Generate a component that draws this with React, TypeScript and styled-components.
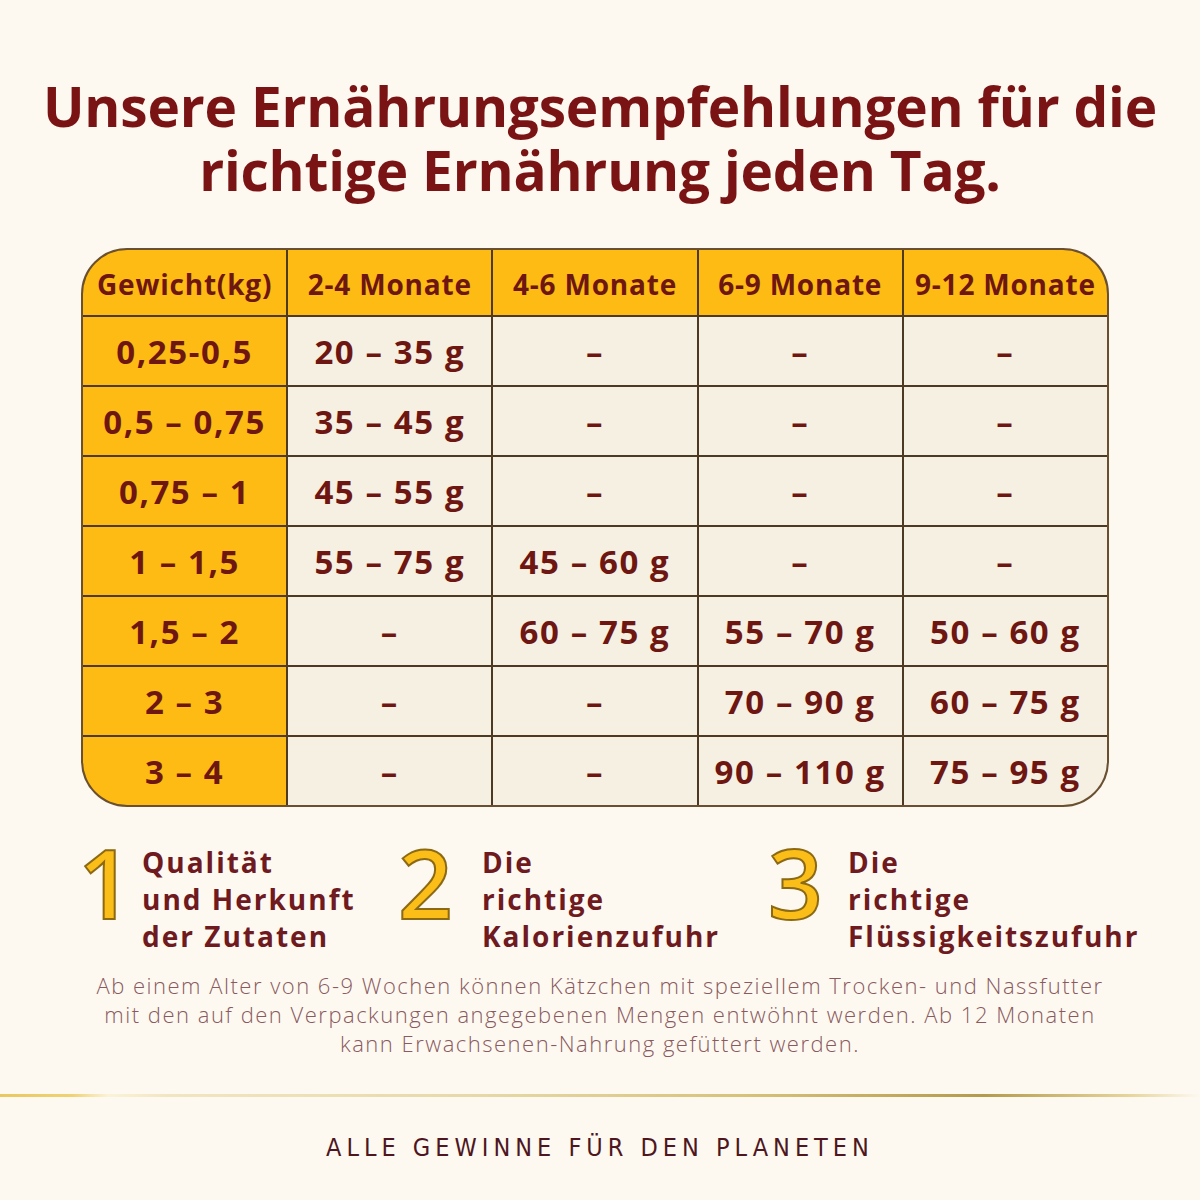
import React from "react";
import styled, { createGlobalStyle } from "styled-components";

const Global = createGlobalStyle`
  html, body { margin: 0; padding: 0; background: #fdf9f1; }
  body { font-family: "Open Sans", "Noto Sans", sans-serif; }
`;

const Page = styled.div`
  width: 1200px;
  height: 1200px;
  background: #fdf9f1;
  display: flex;
  flex-direction: column;
  align-items: center;
  box-sizing: border-box;
  padding-top: 74px;
  overflow: hidden;
`;

const Title = styled.h1`
  margin: 0;
  display: flex;
  flex-direction: column;
  align-items: center;
  font-family: "Open Sans", sans-serif;
  font-weight: 700;
  font-size: 55px;
  color: #7a1414;
  text-align: center;
  letter-spacing: -0.2px;
`;

const TitleLine = styled.span`
  display: block;
  height: 64px;
  line-height: 64px;
  white-space: nowrap;
`;

const Table = styled.div`
  margin: 46px 0 0 -10px;
  width: 1028px;
  box-sizing: border-box;
  display: grid;
  grid-template-columns: repeat(5, 1fr);
  grid-template-rows: 65px repeat(7, 68px);
  gap: 2px;
  background: #4e3a22;
  border: 2px solid #6a5030;
  border-radius: 46px;
  overflow: hidden;
`;

const Cell = styled.div<{ $yellow?: boolean; $head?: boolean }>`
  display: flex;
  align-items: center;
  justify-content: center;
  background: ${(p) => (p.$yellow ? "#fdbb13" : "#f6f0e3")};
  color: #6e1612;
  font-family: "Open Sans", sans-serif;
  font-weight: 700;
  font-size: ${(p) => (p.$head ? "28px" : "33px")};
  letter-spacing: ${(p) => (p.$head ? "0.8px" : "1.6px")};
  white-space: nowrap;
  padding-top: ${(p) => (p.$head ? "2px" : "0")};
`;

const Features = styled.div`
  margin-top: 40px;
  width: 1200px;
  display: grid;
  grid-template-columns: 320px 370px auto;
  padding-left: 78px;
  box-sizing: border-box;
`;

const Feature = styled.div`
  display: flex;
  align-items: flex-start;
`;

const Num = styled.div<{ $w: number }>`
  font-family: "Open Sans", sans-serif;
  font-weight: 600;
  font-size: 96px;
  line-height: 96px;
  color: #fbbd18;
  -webkit-text-stroke: 2px #8c6a14;
  margin-top: -13px;
  width: ${(p) => p.$w}px;
  flex-shrink: 0;
`;

const FeatureText = styled.div`
  font-family: "Open Sans", sans-serif;
  font-weight: 700;
  font-size: 28px;
  line-height: 37px;
  letter-spacing: 2px;
  color: #6e1a1e;
  margin-top: -3px;
  white-space: nowrap;
`;

const Note = styled.p`
  margin: 16px 0 0;
  width: 1100px;
  font-family: "Open Sans", sans-serif;
  font-weight: 300;
  font-size: 22px;
  line-height: 29px;
  color: #8a5a5e;
  text-align: center;
  letter-spacing: 1.5px;
  white-space: nowrap;
`;

const Divider = styled.div`
  margin-top: 36px;
  width: 1200px;
  height: 3px;
  background: linear-gradient(
    90deg,
    #e9c860 0%,
    #efd274 6%,
    #fbf3d8 9%,
    #f1e6c2 14%,
    #e6d9a8 40%,
    #d8c27a 62%,
    #b49a4c 82%,
    #e6d49a 94%,
    #fdf9f1 100%
  );
`;

const Footer = styled.div`
  margin-top: 36px;
  font-family: "DejaVu Sans Condensed", "Liberation Sans Narrow", "Open Sans", sans-serif;
  font-weight: 400;
  font-size: 25px;
  letter-spacing: 5px;
  color: #4e1620;
  text-transform: uppercase;
`;

const headers = ["Gewicht(kg)", "2-4 Monate", "4-6 Monate", "6-9 Monate", "9-12 Monate"];

const rows: string[][] = [
  ["0,25-0,5", "20 - 35 g", "-", "-", "-"],
  ["0,5 - 0,75", "35 - 45 g", "-", "-", "-"],
  ["0,75 - 1", "45 - 55 g", "-", "-", "-"],
  ["1 - 1,5", "55 - 75 g", "45 - 60 g", "-", "-"],
  ["1,5 - 2", "-", "60 - 75 g", "55 - 70 g", "50 - 60 g"],
  ["2 - 3", "-", "-", "70 - 90 g", "60 - 75 g"],
  ["3 - 4", "-", "-", "90 - 110 g", "75 - 95 g"],
];

const features = [
  { n: "1", w: 64, lines: ["Qualität", "und Herkunft", "der Zutaten"] },
  { n: "2", w: 84, lines: ["Die", "richtige", "Kalorienzufuhr"] },
  { n: "3", w: 80, lines: ["Die", "richtige", "Flüssigkeitszufuhr"] },
];

export default function App() {
  return (
    <>
      <Global />
      <Page>
        <Title>
          <TitleLine>Unsere Ernährungsempfehlungen für die</TitleLine>
          <TitleLine>richtige Ernährung jeden Tag.</TitleLine>
        </Title>
        <Table>
          {headers.map((h) => (
            <Cell key={h} $yellow $head>
              {h}
            </Cell>
          ))}
          {rows.map((r, i) =>
            r.map((c, j) => (
              <Cell key={`${i}-${j}`} $yellow={j === 0}>
                {c.replace(/ - /g, " – ").replace(/^-$/, "–")}
              </Cell>
            ))
          )}
        </Table>
        <Features>
          {features.map((f) => (
            <Feature key={f.n}>
              <Num $w={f.w}>{f.n}</Num>
              <FeatureText>
                {f.lines.map((l) => (
                  <div key={l}>{l}</div>
                ))}
              </FeatureText>
            </Feature>
          ))}
        </Features>
        <Note>
          Ab einem Alter von 6-9 Wochen können Kätzchen mit speziellem Trocken- und Nassfutter
          <br />
          mit den auf den Verpackungen angegebenen Mengen entwöhnt werden. Ab 12 Monaten
          <br />
          kann Erwachsenen-Nahrung gefüttert werden.
        </Note>
        <Divider />
        <Footer>Alle Gewinne für den Planeten</Footer>
      </Page>
    </>
  );
}
